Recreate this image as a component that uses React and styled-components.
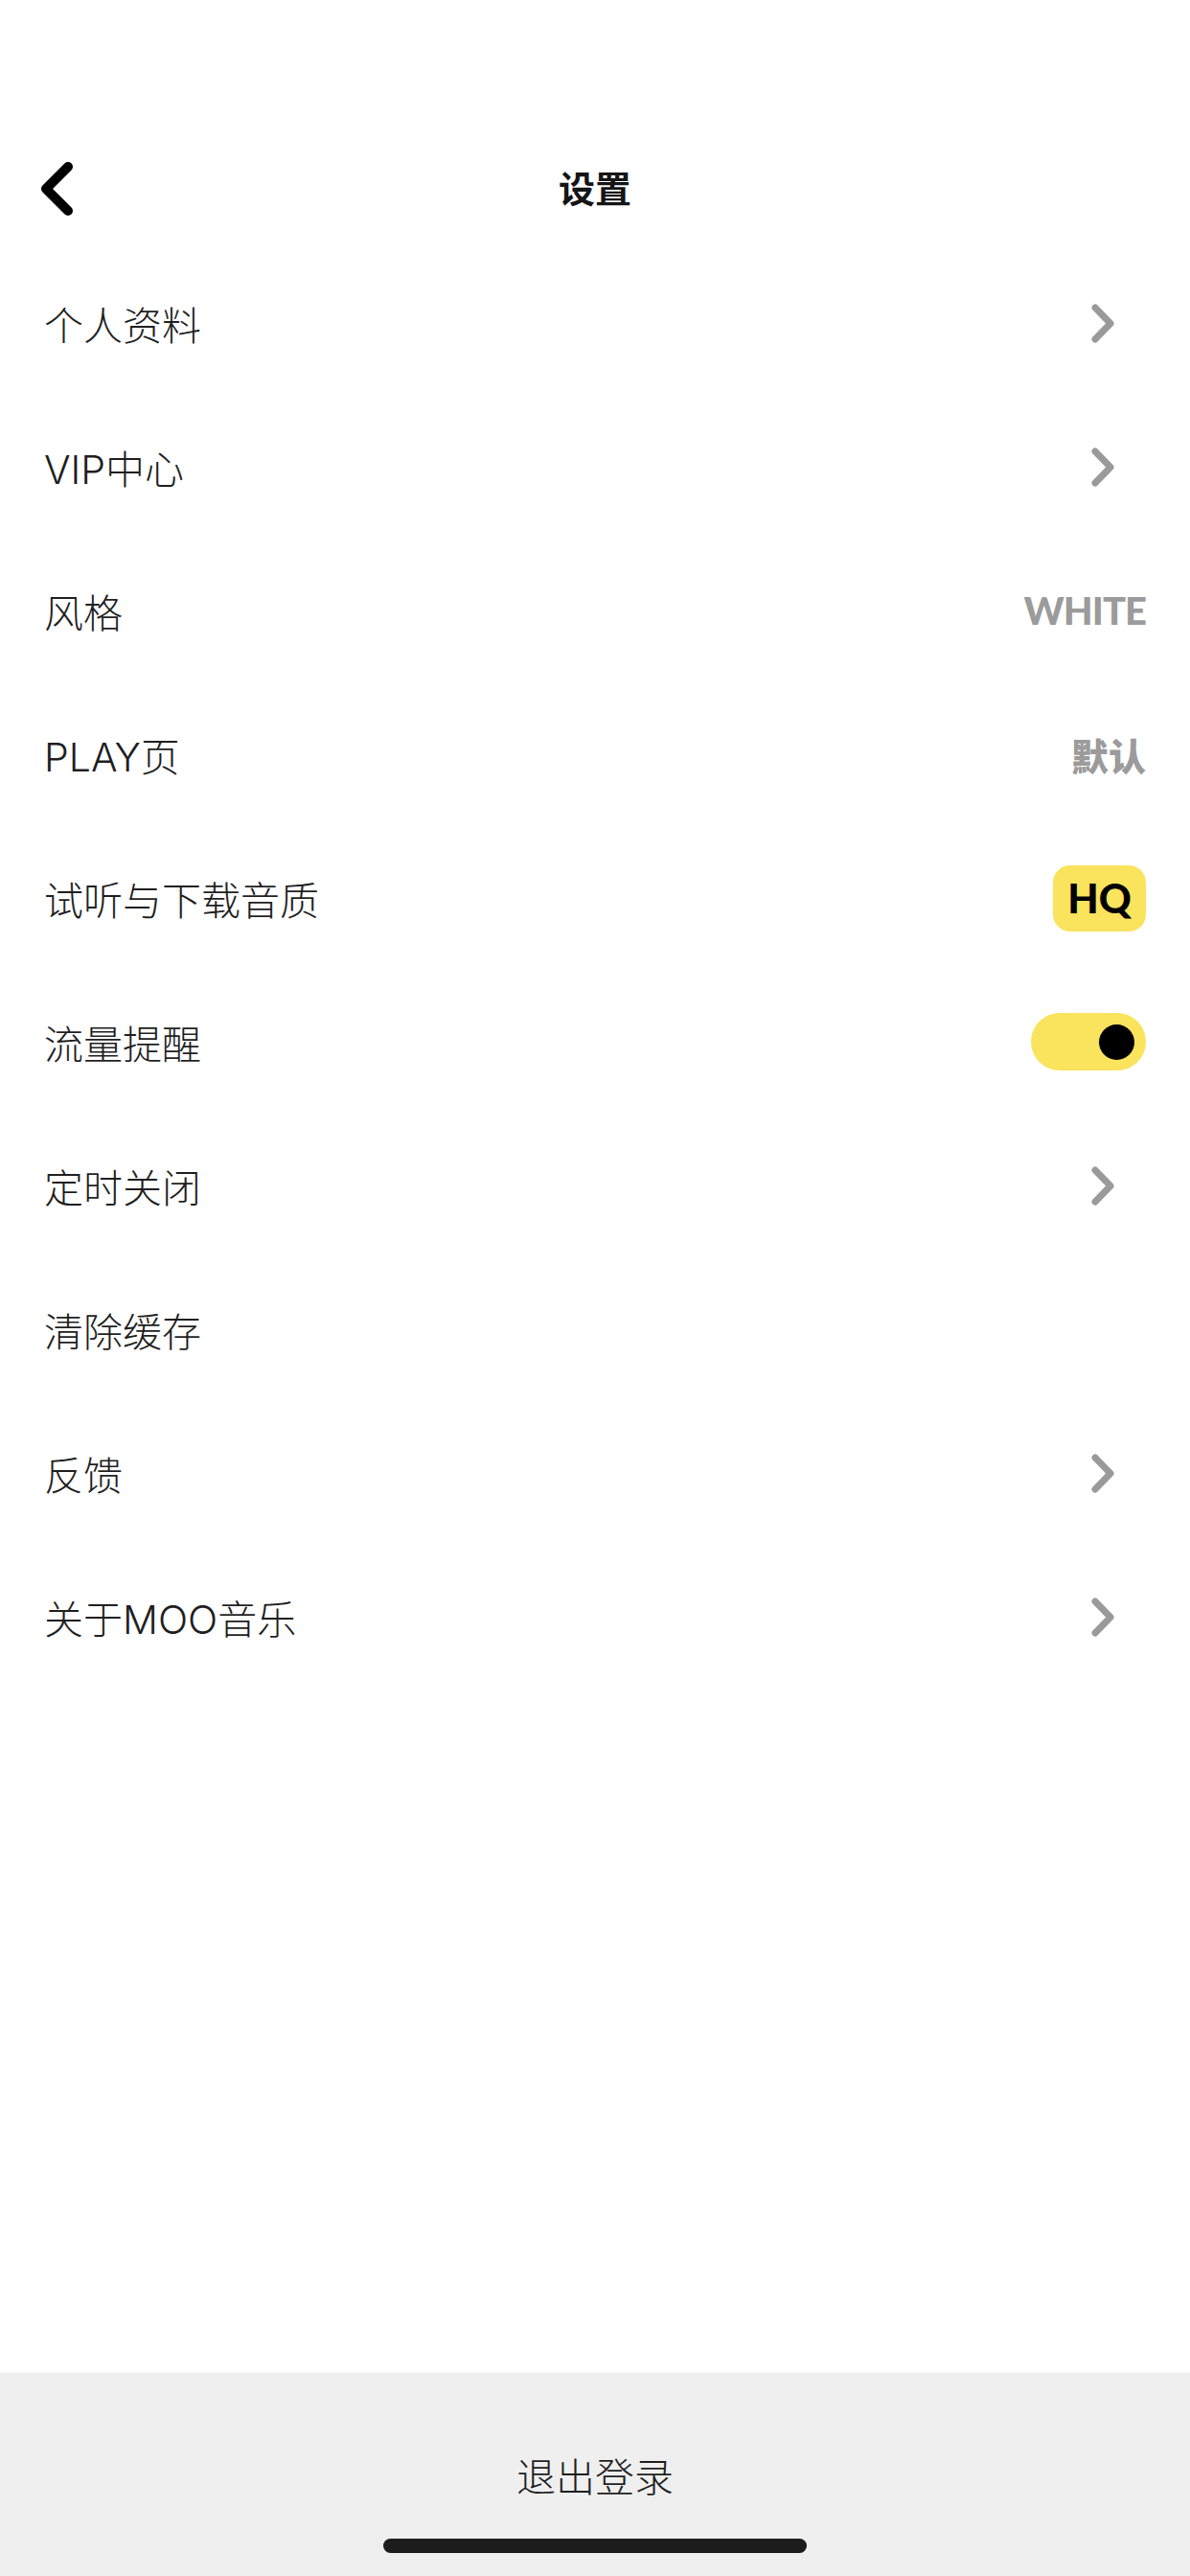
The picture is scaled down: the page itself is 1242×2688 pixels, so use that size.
import React, { useState } from "react";
import styled, { createGlobalStyle } from "styled-components";

const GlobalStyle = createGlobalStyle`
  html, body {
    margin: 0;
    padding: 0;
    background: #ffffff;
  }
  body {
    font-family: Inter, "Noto Sans CJK SC", sans-serif;
    color: #1f1f1f;
  }
`;

const Page = styled.div`
  width: 1242px;
  min-height: 2688px;
  display: flex;
  flex-direction: column;
  background: #ffffff;
`;

const StatusBar = styled.div`
  height: 132px;
`;

const Header = styled.header`
  height: 130px;
  padding-bottom: 4px;
  box-sizing: border-box;
  display: grid;
  grid-template-columns: 120px 1fr 120px;
  align-items: center;
`;

const BackButton = styled.button`
  border: 0;
  background: none;
  padding: 4px 0 0 38px;
  display: flex;
  align-items: center;
  cursor: pointer;
`;

const Title = styled.h1`
  margin: 0;
  text-align: center;
  font-family: "Noto Sans CJK SC", sans-serif;
  font-size: 38px;
  line-height: 1.2;
  font-weight: 700;
  color: #151515;
`;

const List = styled.ul`
  list-style: none;
  margin: 0;
  padding: 0;
`;

const Row = styled.li`
  height: 150px;
  padding: 0 46px;
  display: flex;
  align-items: center;
  justify-content: space-between;
`;

const Label = styled.span`
  font-family: Inter, "Noto Sans CJK SC", sans-serif;
  font-size: 41px;
  font-weight: 300;
  color: #1f1f1f;
`;

const Value = styled.span`
  font-family: ${(p) => (p.$cjk ? `"Noto Sans CJK SC", sans-serif` : `Lato, sans-serif`)};
  font-size: ${(p) => (p.$cjk ? "39px" : "40px")};
  font-weight: 900;
  letter-spacing: ${(p) => (p.$cjk ? "0" : "-1px")};
  color: #9b9b9b;
`;

const Badge = styled.span`
  width: 97px;
  height: 69px;
  border-radius: 18px;
  background: #fae35d;
  display: flex;
  align-items: center;
  justify-content: center;
  font-family: Lato, sans-serif;
  font-size: 42px;
  font-weight: 900;
  color: #000;
`;

const Track = styled.button`
  width: 120px;
  height: 60px;
  border: 0;
  border-radius: 30px;
  background: ${(p) => (p.$on ? "#fae35d" : "#e4e4e4")};
  padding: 0 12px;
  display: flex;
  align-items: center;
  justify-content: ${(p) => (p.$on ? "flex-end" : "flex-start")};
  cursor: pointer;
`;

const Knob = styled.span`
  width: 37px;
  height: 37px;
  border-radius: 50%;
  background: #000;
`;

const ChevronWrap = styled.span`
  display: flex;
  margin-right: 33px;
`;

const Footer = styled.footer`
  margin-top: auto;
  height: 212px;
  background: #efefef;
  display: flex;
  flex-direction: column;
  align-items: center;
`;

const Logout = styled.button`
  margin-top: 76px;
  padding: 0;
  border: 0;
  background: none;
  font-family: "Noto Sans CJK SC", sans-serif;
  font-size: 41px;
  font-weight: 300;
  color: #1f1f1f;
  cursor: pointer;
`;

const HomeIndicator = styled.div`
  margin-top: auto;
  margin-bottom: 24px;
  width: 442px;
  height: 15px;
  border-radius: 8px;
  background: #1c1c1c;
`;

const Chevron = () => (
  <ChevronWrap>
    <svg width="24" height="41" viewBox="0 0 24 41">
      <path
        d="M4 4 L20 20.5 L4 37"
        fill="none"
        stroke="#9a9a9a"
        strokeWidth="7"
        strokeLinecap="round"
        strokeLinejoin="round"
      />
    </svg>
  </ChevronWrap>
);

const BackArrow = () => (
  <svg width="40" height="60" viewBox="0 0 40 60">
    <path
      d="M33 7 L10 30 L33 53"
      fill="none"
      stroke="#000"
      strokeWidth="10"
      strokeLinecap="round"
      strokeLinejoin="round"
    />
  </svg>
);

const App = () => {
  const [remind, setRemind] = useState(true);

  const items = [
    { label: "个人资料", right: <Chevron /> },
    { label: "VIP中心", right: <Chevron /> },
    { label: "风格", right: <Value>WHITE</Value> },
    { label: "PLAY页", right: <Value $cjk>默认</Value> },
    { label: "试听与下载音质", right: <Badge>HQ</Badge> },
    {
      label: "流量提醒",
      right: (
        <Track $on={remind} onClick={() => setRemind(!remind)}>
          <Knob />
        </Track>
      ),
    },
    { label: "定时关闭", right: <Chevron /> },
    { label: "清除缓存", right: null },
    { label: "反馈", right: <Chevron /> },
    { label: "关于MOO音乐", right: <Chevron /> },
  ];

  return (
    <Page>
      <GlobalStyle />
      <StatusBar />
      <Header>
        <BackButton aria-label="返回">
          <BackArrow />
        </BackButton>
        <Title>设置</Title>
        <span />
      </Header>
      <List>
        {items.map((item) => (
          <Row key={item.label}>
            <Label>{item.label}</Label>
            {item.right}
          </Row>
        ))}
      </List>
      <Footer>
        <Logout>退出登录</Logout>
        <HomeIndicator />
      </Footer>
    </Page>
  );
};

export default App;
